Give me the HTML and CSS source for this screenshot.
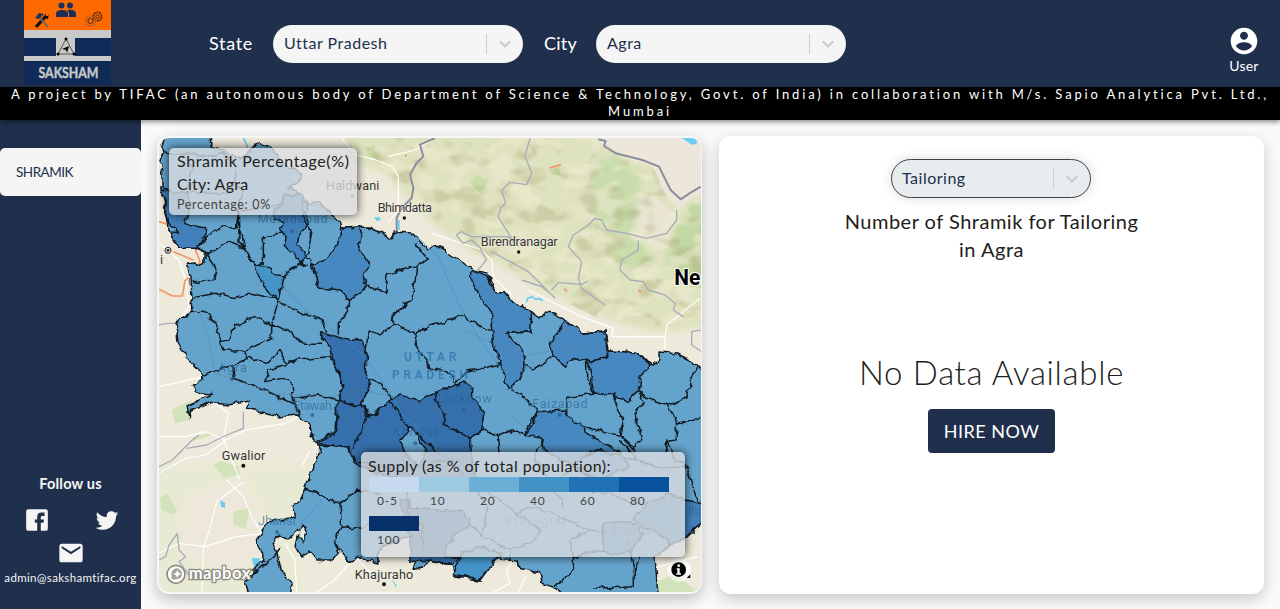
FILE: index.html
```html
<!DOCTYPE html>
<html lang="en">
<head>
<meta charset="utf-8">
<title>Saksham</title>
<link rel="stylesheet" href="styles.css">
</head>
<body>
<header class="topbar">
  <svg class="logo" viewBox="0 0 87 84" width="87" height="84">
    <rect width="87" height="84" fill="#102b58"/>
    <rect width="87" height="30" fill="#ff6a00"/>
    <rect y="30" width="87" height="8" fill="#c9c9c9"/>
    <rect y="56" width="87" height="5" fill="#c9c9c9"/>
    <rect x="32" y="30" width="19" height="28" fill="#c9c9c9"/>
    <g fill="#1c2f5c"><circle cx="37.500" cy="5.500" r="3"/><circle cx="46" cy="5.500" r="3"/><path d="M32 17v-3q0-4 6-4t6 4v3zM45 17v-3q0-2-2-4 9-1 9 4v3z"/></g>
    <path d="M22 16 12 27" stroke="#111" stroke-width="3.200"/><path d="m14 16 10 11" stroke="#75635b" stroke-width="2"/><path d="m11 18 4-5 5 1-5 5z" fill="#233153"/><path d="m20 18 2-5v3h2l1-2-1 5z" fill="#111"/>
    <g fill="none" stroke="#4b240e"><circle cx="73.500" cy="16.500" r="4.200" stroke-width="1.500" stroke-dasharray="2 .6"/><circle cx="73.500" cy="16.500" r="1.800"/><circle cx="66.500" cy="21" r="5" stroke="#b65e25" stroke-width="1.600" stroke-dasharray="2 .7"/><circle cx="66.500" cy="21" r="2.600" stroke="#4b240e"/></g>
    <path d="M34 54 42 39l8 15z" fill="none" stroke="#555"/><circle cx="42" cy="39" r="1.500"/><circle cx="34" cy="54" r="1.500"/><circle cx="50" cy="54" r="1.500"/><path d="m38 49 7-3-2 7-1-3z"/>
    <text class="logo-word" x="14.500" y="77.500" textLength="60" lengthAdjust="spacingAndGlyphs">SAKSHAM</text>
  </svg>
  <span class="field-label state-label">State</span>
  <div class="select"><span>Uttar Pradesh</span><i></i><svg class="chev" width="20" height="20" viewBox="0 0 20 20"><path d="m5.500 8 4.500 4.500L14.500 8"/></svg></div>
  <span class="field-label city-label">City</span>
  <div class="select"><span>Agra</span><i></i><svg class="chev" width="20" height="20" viewBox="0 0 20 20"><path d="m5.500 8 4.500 4.500L14.500 8"/></svg></div>
  <div class="user">
    <svg width="32" height="32" viewBox="0 0 24 24"><path fill="#fff" d="M12 2C6.480 2 2 6.480 2 12s4.480 10 10 10 10-4.480 10-10S17.520 2 12 2zm0 3c1.660 0 3 1.340 3 3s-1.340 3-3 3-3-1.340-3-3 1.340-3 3-3zm0 14.200c-2.500 0-4.710-1.280-6-3.220.030-1.990 4-3.080 6-3.080s5.970 1.090 6 3.080c-1.290 1.940-3.500 3.220-6 3.220z"/></svg>
    <span>User</span>
  </div>
</header>
<div class="banner">
  <div class="banner-1">A project by TIFAC (an autonomous body of Department of Science &amp; Technology, Govt. of India) in collaboration with M/s. Sapio Analytica Pvt. Ltd.,</div>
  <div class="banner-2">Mumbai</div>
</div>
<div class="body">
  <aside class="sidebar">
    <a class="nav-item">SHRAMIK</a>
    <div class="follow">
      <strong>Follow us</strong>
      <div class="social">
        <svg width="26" height="26" viewBox="0 0 24 24"><path fill="#f5f5f5" d="M4 2h16a2 2 0 0 1 2 2v16a2 2 0 0 1-2 2h-4.500v-7.500H18l.5-3h-3V9.500q0-1.300 1.500-1.300h2V5h-3q-3.800 0-3.800 4v2.500H10v3h2.200V22H4a2 2 0 0 1-2-2V4a2 2 0 0 1 2-2z"/></svg>
        <svg width="26" height="26" viewBox="0 0 24 24"><path fill="#f5f5f5" d="M22.460 6c-.770.350-1.600.580-2.460.690.880-.530 1.560-1.370 1.880-2.380-.830.500-1.750.850-2.720 1.050C18.370 4.500 17.260 4 16 4c-2.350 0-4.270 1.920-4.270 4.290 0 .340.040.670.110.980C8.280 9.090 5.110 7.380 3 4.790c-.370.630-.580 1.370-.580 2.150 0 1.490.750 2.810 1.910 3.560-.710 0-1.370-.200-1.950-.500v.030c0 2.080 1.480 3.820 3.440 4.210a4.220 4.220 0 0 1-1.930.070 4.280 4.280 0 0 0 4 2.980 8.521 8.521 0 0 1-5.330 1.840c-.340 0-.680-.020-1.020-.060C3.440 20.290 5.700 21 8.120 21 16 21 20.330 14.460 20.330 8.790c0-.190 0-.370-.010-.560.840-.600 1.560-1.360 2.140-2.230z"/></svg>
      </div>
      <svg class="mail" width="28" height="28" viewBox="0 0 24 24"><path fill="#f5f5f5" d="M20 4H4c-1.100 0-2 .900-2 2v12c0 1.100.900 2 2 2h16c1.100 0 2-.900 2-2V6c0-1.100-.900-2-2-2zm0 4-8 5-8-5V6l8 5 8-5v2z"/></svg>
      <span class="email">admin@sakshamtifac.org</span>
    </div>
  </aside>
  <main class="content">
    <section class="map-card">
      <svg class="map" viewBox="12 24 1626 1362" width="542" height="454">
        <defs>
          <filter id="jag" x="-2%" y="-2%" width="104%" height="104%" color-interpolation-filters="sRGB">
            <feTurbulence type="fractalNoise" baseFrequency=".04" numOctaves="2" seed="4"/>
            <feDisplacementMap in="SourceGraphic" scale="20" xChannelSelector="R" yChannelSelector="G"/>
          </filter>
          <filter id="relief" x="0" y="0" width="100%" height="100%" color-interpolation-filters="sRGB">
            <feTurbulence type="fractalNoise" baseFrequency=".012 .018" numOctaves="2" seed="8"/>
            <feColorMatrix values="0 0 0 0 .66  0 0 0 0 .65  0 0 0 0 .45  7 0 0 0 -3.6" result="n"/>
            <feComposite in="n" in2="SourceGraphic" operator="in"/>
          </filter>
          <filter id="relief2" x="0" y="0" width="100%" height="100%" color-interpolation-filters="sRGB">
            <feTurbulence type="fractalNoise" baseFrequency=".013 .02" numOctaves="2" seed="21"/>
            <feColorMatrix values="0 0 0 0 .94  0 0 0 0 .93  0 0 0 0 .83  0 7 0 0 -3.4" result="n"/>
            <feComposite in="n" in2="SourceGraphic" operator="in"/>
          </filter>
          <filter id="soft"><feGaussianBlur stdDeviation="9"/></filter>
        </defs>
        <rect width="1650" height="1400" fill="#edeadb"/>
        <g filter="url(#soft)">
          <path d="M0 1000H500L420 1150 440 1400H0z" fill="#e9ead3"/>
          <path d="M100 1100l160-60 120 200-140 100-170-60z" fill="#ede8da"/>
          <path d="M560 0H1680V590L1500 610 1360 570 1150 480 1060 420 960 370 840 290 760 210 690 130 600 100z" fill="#dfe2bf"/>
        </g>
        <g fill="#ece7da"><path d="M1325 24H1638V190l-65 45-50-45-30-80-80-25-50-35z"/><path d="M1390 300l50-110 60 10 70 60-25 90-80 20-90-15z" opacity=".7"/></g>
        <g filter="url(#soft)">
          <path d="M1330 90l60-15 70 50-10 60 0 70-30 80-50-25-50-40 0-80-20-40z" fill="#c9dcac"/>
          <path d="M1660 190l-80 50-30 90-20 60 50 70 80 20z" fill="#c3d8a2"/>
          <path d="M1370 350l60-30 70 25-5 60-60 10-60-20z" fill="#c9dcaa"/>
        </g>
        <g fill="#c9dcaa"><path d="M945 155l20-22 20 15 15-5-10 35-20 8z"/><path d="M635 55l25-10-2 20 20 10-10 20-30-12z"/><path d="M1182 115h35l-5 20h-20z"/></g>
        <path filter="url(#relief)" opacity=".34" d="M600 24H1325L1350 40 1490 100 1530 190 1575 235 1638 190V560L1500 590 1320 560 1160 480 1060 410 940 350 840 270 760 200 680 110z"/>
        <path filter="url(#relief2)" opacity=".5" d="M600 24H1325L1350 40 1490 100 1530 190 1575 235 1638 190V560L1500 590 1320 560 1160 480 1060 410 940 350 840 270 760 200 680 110z"/>
        <g fill="#d2e2ba"><path d="M50 840l60-30-5 60-45 10zM110 925l60-20-5 12-50 15zM175 1005l20-12 55 15 5 25-45 12zM15 1105l20-15 32 50-10 15-38-15zM235 1145l50-12-15 65-35-15zM1500 1360l60-30 70 60h-130z"/></g>
        <g fill="#6ccdf0"><path d="M263 24h6l12 28-5 2zM195 1110l15 8v16l-12-4zM290 1285h25l-5 35-12-5zM658 262h18v8l-12 3zM728 270h6v30h-6zM1580 24l45 0 0 18-15 2zM708 1345l18 22-4 3z"/></g>
        <path d="M1114 518l3-12 14-6 10 8 12-2 10 6" fill="none" stroke="#6ccdf0" stroke-width="5"/>
        <g fill="none" stroke="#fff" stroke-width="3.500" stroke-linejoin="round">
          <path d="M12 770 145 740M170 810l50 40-15 80 50 120M12 920l80 0 60-15 60 25 60-30 120-20 60-30M12 1030l80-45 60-10 70-50M215 1050l50 50 25 60 45 75 30 40M265 1055l-80 60-20 80-20 60-5 140M12 1270l60-30 80 10 90-30 130-15M390 1240l30 50 5 100M440 1010l25-50M480 1390l60-40 60-70 60 60M1010 1390l55-30-10-40 30-50M1090 1390l20-50M1510 1310l120-30M12 340l60 50 20 60 10 80-30 40"/>
          <path d="M560 24l40 50 60 15 50 20 20 30 0 100-30 40M700 80l80-20 50-30M830 310l150 50 30 30 5 50 60 60M1120 480l160 80 95 35-5 25h160v45M1530 625l5-40 100-80"/>
        </g>
        <g fill="none" stroke="#a9acb8" stroke-width="4" stroke-linejoin="round">
          <path d="M12 585l25-5 25 0 15 5 55-20M12 1010l40-20 60-60 20-15M12 1290l20-10 10-35 25-35 5 50 20 20-20 15 30 40M95 955l60-10 60-30 50-20 0-50M1125 24l-15 55 20 50-15 35-50-7-25 25 12 38-15 15-8 25 50 80-20-20-110 0-30-15-15 10 20 25 25-10 25 20 20 40-50 60M1010 365l110 60 20 20 60 60M1320 265l-20 20-45 30-15 35 40 45-10 50 10 30 70 50M1318 265l22 5 15 30 60 10 60 15 60-15 30-40 0-30M1450 330v30l-50 30-5 30 30 30 40 5 15 25 50 15 30 25-5 20 30 20M1190 480l20-22 70 5 20-10M1100 450l60 20 25 20M1640 600l-30 5 0 40 30 20M490 1300l70-35 15-5"/>
        </g>
        <path d="M840 24l-45 20 10 35-20 20-20 35 10 40-5 30-30 30-15 30 0 60M1330 28l22 5-5 15 35 22 80 20 50 20 20 40 15 30 30 28 30-20 30-18" fill="none" stroke="#8c8e9f" stroke-width="6" stroke-linejoin="round"/>
        <g fill="none" stroke="#f79663" stroke-width="5"><path d="M12 275l25 8M12 478l40 20h30l8-45 10-10M55 365l60 25M120 355l15 40-10 15M1183 114l35-10M1228 477l8 7M1450 480l8 7M750 77h6"/></g>

        <g filter="url(#jag)" stroke="#111b24" stroke-width="4.600" stroke-linejoin="round">
          <g transform="scale(3) translate(-155 -130)"><path stroke-width="1.500" fill="#64a4cc" d="M166 132 162 147 163 153 160 162 162 173 162 188 165 208 168 222 170 233 178 248 195 248 205 253 205 262 198 265 187 262 190 277 191 300 192 312 175 322 178 342 187 358 200 370 204 375 202 382 192 387 200 393 212 394 187 406 189 417 191 411 210 402 228 405 250 401 248 408 278 417 297 415 310 425 312 437 318 443 320 448 317 460 310 475 305 488 300 500 292 507 295 517 268 522 257 538 260 548 265 560 255 568 255 573 245 583 250 596H292V583L282 573 277 553 273 543 280 535 288 540 302 525 307 532 303 543 297 537 295 547 302 557 310 550 318 560 333 560 338 553 335 543 342 553 350 563 355 557 378 563 378 550 400 538 412 537 422 550 413 568 420 570 430 560 452 565 455 577 480 580 488 567 490 557 517 560 518 567 540 572 542 583 553 587 563 596H658L655 557 670 545 687 537 710 515V370L697 367 693 362 678 354 659 352 659 360 652 365 642 355 623 351 608 350 605 331 583 333 565 320 555 313 545 312 540 318 532 312 513 302 505 292 495 292 487 273 473 270 462 262 447 252 435 245 428 250 412 233 395 232 390 240 382 233 368 227 342 228 340 222 328 210 318 202 305 203 302 195 288 188 298 183 303 173 282 165 272 148 258 143 243 158 211 147 210 132z"/></g>
          <path fill="#4180bb" d="M22 178 100 190 105 235 92 285 155 293 150 325 125 355 70 355 45 310 70 310 40 275z"/>
          <path fill="#4181bb" d="M385 195 440 195 445 240 465 280 435 310 430 345 455 380 440 400 415 375 385 350 390 320 375 300 385 275 360 265 355 240 385 220z"/>
          <path fill="#4888c0" d="M560 295 620 290 610 350 640 400 625 440 632 470 615 490 580 510 560 480 495 475 490 445 465 410 520 380 550 335z"/>
          <path fill="#4494c8" d="M300 405 345 410 350 430 385 435 380 460 370 510 355 500 310 440z"/>
          <g transform="translate(0 450)" fill="#356fac">
            <path d="M500 155 560 175 620 180 635 215 630 285 645 300 640 335 620 370 600 380 550 360 565 320 555 290 530 240 525 200 500 175z"/>
            <path d="M550 360 600 380 620 372 640 405 665 400 700 360 740 345 790 365 845 335 890 370 945 475 960 620 700 590 600 550 580 500 490 490 540 460 545 370z"/>
            <path fill="none" d="M620 372 635 410 620 450 590 505M700 360 730 390 745 430 830 500 860 530"/>
            <path fill="#64a4cc" d="M735 480 770 440 785 470 815 510 790 560 750 520z"/>
            <path fill="#64a4cc" d="M620 370 640 335 645 295 675 310 710 355 665 400 640 405z"/>
          </g>
          <g transform="translate(825 450)" fill="#4888c0">
            <path d="M125-30 170-10 195 35 225 35 250 65 305 95 302 155 225 160 280 210 285 250 270 300 235 325 220 290 215 250 190 190 185 100 150 50 125 0z"/>
            <path d="M405 120 460 160 525 152 533 230 470 245 430 232 405 260 370 230 360 185 385 160z"/>
            <path d="M470 245 533 232 533 210 580 212 635 225 660 255 630 290 625 335 590 365 550 345 490 340 485 300 480 265z"/>
            <path d="M320 395 405 390 410 410 465 440 470 460 560 510 600 560 500 600 340 510 335 475 285 465 300 430z"/>
            <path fill="#356fac" d="M20 335 100 305 125 320 125 350 165 400 155 450 120 475 40 430 45 400 15 360z"/>
          </g>
          <g transform="translate(825 930)" fill="#4181bb">
            <path fill="#356fac" d="M-60 180-60 205 100 215 120 250 50 310 45 350 85 352 65 375 0 360-60 365-60 290-90 180z"/>
            <path fill="#4494c8" d="M90 345 85 370 70 405 150 420 180 380 215 340 150 320z"/>
            <path d="M520 250 600 245 640 280 600 335 550 345 520 330z"/>
            <path d="M610 235 650 190 720 165 780 180 820 190 820 240 770 290 720 315 690 280 630 260z"/>
          </g>
          <g fill="none">
            <path d="M20 60 60 75 100 70 165 80 200 70 235 95M100 70 110 120 95 190M235 95 240 150 220 190 105 190M240 150 260 190 250 240 245 290 200 290 155 320 125 350M245 240 290 240 350 230 385 220M250 290 270 355 300 405M125 350 155 375 215 335 275 355M155 375 185 420 180 450 110 455M300 405 325 400 325 318 385 308M385 435 440 400 455 410M455 210 460 240 440 255 470 310 455 380 490 445M632 470 680 480 692 490 695 435 785 405 780 460 775 480 770 510 715 550 712 580M250 240 252 340 275 355M785 405 820 390 780 340"/>
            <g transform="translate(0 450)"><path d="M108 55 180 40 230 55 290 40 370 60 350 135 300 110 235 140 225 180 195 185 180 130 145 90 110 95M355 55 375 68 440 100 500 120 515 155M195 185 205 210 275 210 350 175 350 135 400 150 440 190 500 190M275 210 270 240 230 260 190 270 148 285M275 232 340 248 375 210 395 250 430 240M230 260 235 295 310 320 370 350 425 375M332 300 340 270 430 240 520 230 550 270 565 320 550 360 490 345 415 355 410 300 380 295 332 305zM415 355 430 405M545 370 545 450 490 485M550 165 550 130 580 90 580 55M632 220 640 155 670 165 715 135 720 100 770 60M715 135 780 160 840 130M780 160 785 200 830 270"/></g>
            <g transform="translate(825 450)"><path d="M0 135 60 120 110 105 125 125 185 155M0 265 50 275 75 310M75 310 100 280 215 250M240 325 275 345 320 395 310 430 285 465M120 475 160 450 210 465 250 450 285 465M205 465 210 520M225 160 305 155M285 250 310 270 370 230M470 245 470 290 490 340 430 350 410 360 410 410M550 345 565 395 580 420 570 465 610 500M465 440 520 455 570 465M625 335 640 370 615 400 635 480 610 500 615 520M625 335 650 355 715 375 770 355 785 300 800 260M715 375 740 430 735 480 710 485 705 520M740 430 815 415M570 465 610 510"/></g>
            <g transform="translate(0 930)"><path d="M490 15 580 20 600 60 680 85 760 100M450 145 485 155 520 180 555 190 610 150 680 160M555 190 560 260 620 265 680 230M560 260 535 310M268 425 360 345 375 325M760 100 760 220 800 250 805 330"/></g>
            <g transform="translate(825 930)"><path d="M0 65 60 60 110 120 210 180 260 220 320 200 390 230 480 270 520 280M320 90 390 140 540 160 610 190 650 190M400 200 370 140 450 60 500 30 620 60 690 85 770 80 800 180M620 60 570 0M260 220 330 270 300 310 240 330 160 290 170 200 120 120M120 250 160 290 240 330 240 360M430 350 430 390 375 440M480 270 420 300 430 350 520 330M600 335 610 380 610 440 490 445M630 350 610 400M340 0 310 60 360 90M710 0 730 50 770 80"/></g>
          </g>
        </g>
        <g fill="none" stroke="#3f8fc4" stroke-width="3" opacity=".65"><path d="M380 465 450 540 520 590 620 670 700 780 740 850 850 950M775 310 850 380 910 520 970 620 1020 690 1070 780 1160 850 1240 860 1320 910M500 1110 440 1180 430 1240"/></g>
        <g fill="none" stroke="#577991" stroke-width="3" opacity=".35"><path d="M100 450 160 620 180 730 360 790 520 800 620 780 760 810 890 850M930 600 1100 680 1300 640M1060 850 1180 960M310 460 400 420"/></g>

        <g class="city"><text x="513" y="179" textLength="160">Haldwani</text><text x="668" y="247" textLength="163">Bhimdatta</text><text x="977" y="349" textLength="231">Birendranagar</text><text x="200" y="990" textLength="131">Gwalior</text><text x="599" y="1346" textLength="176">Khajuraho</text><text x="15" y="402">i</text></g>
        <g class="city faded"><text x="308" y="280" textLength="210">Moradabad</text><text x="188" y="727" textLength="88">Agra</text><text x="415" y="839" textLength="116">Etawah</text><text x="712" y="918" textLength="138">Kanpur</text><text x="848" y="818" textLength="162">Lucknow</text><text x="1132" y="833" textLength="166">Faizabad</text><text x="310" y="1186" textLength="112">Jhansi</text><text x="1050" y="1186" textLength="180">Prayagraj</text><text x="1340" y="1212" textLength="160">Varanasi</text><text x="1600" y="1154" textLength="36" lengthAdjust="spacingAndGlyphs">Bu</text></g>
        <g class="region"><text x="747" y="694" textLength="157">UTTAR</text><text x="711" y="747" textLength="228">PRADESH</text></g>
        <text class="country" x="1558" y="465" textLength="78" lengthAdjust="spacingAndGlyphs">Ne</text>
        <g fill="#111"><circle cx="748" cy="264" r="5"/><circle cx="1091" cy="366" r="5"/><circle cx="265" cy="1007" r="6"/><circle cx="687" cy="1363" r="6"/><circle cx="39" cy="361" r="4"/></g>
        <circle cx="39" cy="361" r="9" fill="none" stroke="#222" stroke-width="3"/>
        <g fill="#285e91" opacity=".75"><circle cx="412" cy="303" r="6"/><circle cx="592" cy="198" r="6"/><circle cx="231" cy="747" r="6"/><circle cx="472" cy="855" r="6"/><circle cx="925" cy="839" r="6"/><circle cx="1214" cy="855" r="6"/><circle cx="366" cy="1206" r="6"/><circle cx="781" cy="940" r="6"/><circle cx="1420" cy="1237" r="6"/></g>
        <g><circle cx="63" cy="1333" r="27" fill="#fff" stroke="#8d8b83" stroke-width="5"/><circle cx="65" cy="1331" r="16" fill="#a5a39a"/><path d="M50 1348q-2-17 8-27l22 20q-12 10-30 7" fill="#a5a39a"/><path d="m67 1320 4 8 8 4-8 4-4 8-4-8-8-4 8-4z" fill="#fff"/><text class="mapbox" x="101" y="1347" textLength="185">mapbox</text></g>
        <g><circle cx="1572" cy="1320" r="35" fill="#fff" opacity=".6"/><circle cx="1571" cy="1319" r="22"/><circle cx="1571" cy="1307" r="4" fill="#fff"/><path d="M1565 1315h9v15h4v4h-14v-4h3v-11h-2z" fill="#fff"/><path d="M1593 1300h14v45h-14z" fill="#fff" opacity=".7"/><path d="m1606 1333v11h-11z"/></g>
      </svg>
      <div class="tooltip"><div class="tip-title">Shramik Percentage(%)</div><div class="tip-city">City: Agra</div><div class="tip-small">Percentage: 0%</div></div>
      <div class="legend"><div class="legend-title">Supply (as % of total population):</div>
        <div class="scale">
          <div class="step"><b class="c0"></b><span>0-5</span></div><div class="step"><b class="c10"></b><span>10</span></div><div class="step"><b class="c20"></b><span>20</span></div><div class="step"><b class="c40"></b><span>40</span></div><div class="step"><b class="c60"></b><span>60</span></div><div class="step"><b class="c80"></b><span>80</span></div><div class="step"><b class="c100"></b><span>100</span></div>
        </div>
      </div>
    </section>
    <section class="data-card">
      <div class="select trade"><span>Tailoring</span><i></i><svg class="chev" width="20" height="20" viewBox="0 0 20 20"><path d="m5.500 8 4.500 4.500L14.500 8"/></svg></div>
      <h2>Number of Shramik for Tailoring<br><span class="in-city">in Agra</span></h2>
      <p class="empty">No Data Available</p>
      <button class="hire">HIRE NOW</button>
    </section>
  </main>
</div>
</body>
</html>
```
FILE: styles.css
```css
* { box-sizing: border-box; }
body { margin: 0; width: 1280px; height: 609px; overflow: hidden; background: #fafafa; font-family: Lato, "Open Sans", sans-serif; color: #212121; }
.topbar { height: 87px; background: #20304c; display: flex; align-items: center; color: #fff; padding-left: 24px; }
.logo { align-self: flex-start; flex: none; }
.logo-word { font: 700 15px Lato, sans-serif; fill: #c9c9c9; stroke: #c9c9c9; stroke-width: .4; }
.field-label { font-size: 18px; line-height: 24px; padding-bottom: 1px; }
.state-label { margin-left: 98px; width: 64px; letter-spacing: .7px; }
.city-label { margin-left: 21px; width: 52px; letter-spacing: .2px; }
.select { width: 250px; height: 38px; border-radius: 20px; background: #f5f5f5; color: #20304c; font-size: 16px; letter-spacing: .5px; display: flex; align-items: center; padding: 0 8px 0 11px; }
.select span { flex: 1; padding-bottom: 2px; }
.select i { width: 1px; height: 20px; background: #ccc; }
.chev { margin-left: 8px; fill: none; stroke: #ccc; stroke-width: 2.200; stroke-linecap: round; }
.select .chev { margin-right: 0; }
.user { margin-left: auto; width: 72px; display: flex; flex-direction: column; align-items: center; font-size: 14px; line-height: 18px; padding-top: 12px; letter-spacing: .2px; }
.banner { position: relative; display: flow-root; height: 33px; background: #000; color: #fff; font-size: 13px; line-height: 16.500px; text-align: center; white-space: nowrap; letter-spacing: 2.840px; box-shadow: 0 2px 5px rgba(0,0,0,.45); z-index: 1; }
.banner-1 { margin-top: -1px; }
.body { display: flex; height: 489px; }
.sidebar { width: 141px; background: #20304c; color: #f5f5f5; padding-top: 28px; display: flex; flex-direction: column; justify-content: space-between; }
.nav-item { display: block; height: 48px; border-radius: 5px; background: #f5f5f5; color: #20304c; padding-left: 16px; font-size: 13.500px; line-height: 48px; letter-spacing: -.5px; }
.follow { display: flex; flex-direction: column; align-items: center; height: 133px; }
.follow strong { font-size: 14.500px; line-height: 16px; letter-spacing: .2px; }
.social { display: flex; gap: 44px; margin: 15px 0 0 2px; }
.mail { margin-top: 6px; }
.email { margin-top: 3px; font-size: 11.500px; line-height: 16px; letter-spacing: .34px; }
.content { display: flex; gap: 17px; padding: 16px; }
.map-card { position: relative; width: 545px; height: 458px; padding: 2px; border-radius: 12px; background: #f7f7f7; box-shadow: 0 5px 15px rgba(0,0,0,.25); }
.map { display: block; border-radius: 10px; }
.city { font: 38px Roboto, sans-serif; fill: #333; paint-order: stroke; stroke: #f5f2e5; stroke-width: 3px; }
.city.faded { fill: #286090; stroke: none; opacity: .6; }
.region { font: 700 36px Roboto, sans-serif; fill: #347aae; opacity: .85; }
.country { font: 700 68px Roboto, sans-serif; fill: #000; paint-order: stroke; stroke: #fff; stroke-width: 6px; }
.mapbox { font: 700 50px Lato, sans-serif; fill: #fff; stroke: #8d8b83; stroke-width: 8px; paint-order: stroke; }
.tooltip, .legend { position: absolute; background: rgba(218,220,222,.8); border-radius: 5px; box-shadow: 0 0 10px rgba(0,0,0,.75); color: #212121; }
.tooltip { left: 12px; top: 12px; width: 188px; height: 67px; padding: 1px 8px; white-space: nowrap; }
.tip-title, .tip-city { font-size: 16px; line-height: 23px; letter-spacing: .25px; }
.tip-title { letter-spacing: .6px; }
.tip-small { font-size: 12.500px; font-weight: 400; line-height: 20px; letter-spacing: .65px; color: #444; }
.legend { left: 204px; top: 316px; width: 324px; height: 105px; padding: 3px 7px; }
.legend-title { font-size: 16px; line-height: 22px; white-space: nowrap; letter-spacing: .42px; }
.scale { display: flex; flex-wrap: wrap; width: 301px; margin-left: 1px; }
.step { width: 50px; height: 39px; font-size: 12px; letter-spacing: .8px; color: #444; }
.step b { display: block; height: 15px; }
.step span { display: block; line-height: 18px; padding-left: 8px; }
.step:nth-child(n+2):nth-child(-n+6) span { padding-left: 11px; }
.c0 { background: #c6d9ee; } .c10 { background: #9dcae1; } .c20 { background: #6bafd7; } .c40 { background: #4292c6; } .c60 { background: #2171b5; } .c80 { background: #08519c; } .c100 { background: #08306b; }
.data-card { width: 545px; height: 458px; background: #fff; border-radius: 12px; box-shadow: 0 5px 15px rgba(0,0,0,.2); display: flex; flex-direction: column; align-items: center; padding-top: 23px; }
.trade { width: 200px; height: 39px; flex: none; margin-right: 1px; border: 1px solid #444; background: #e7ecef; padding-left: 10px; box-shadow: 0 0 12px rgba(0,0,0,.15); }
.data-card h2 { margin: 9px 0 0; font-size: 20px; font-weight: 400; line-height: 28px; text-align: center; letter-spacing: .5px; }
.empty { margin: 87px 0 0; font-size: 33px; font-weight: 300; line-height: 45px; letter-spacing: .7px; }
.hire { margin-top: 14px; width: 127px; height: 44px; border: 0; border-radius: 4px; background: #20304c; color: #fff; font: 400 18px Lato, sans-serif; letter-spacing: .5px; padding: 0 0 1px; }
```
